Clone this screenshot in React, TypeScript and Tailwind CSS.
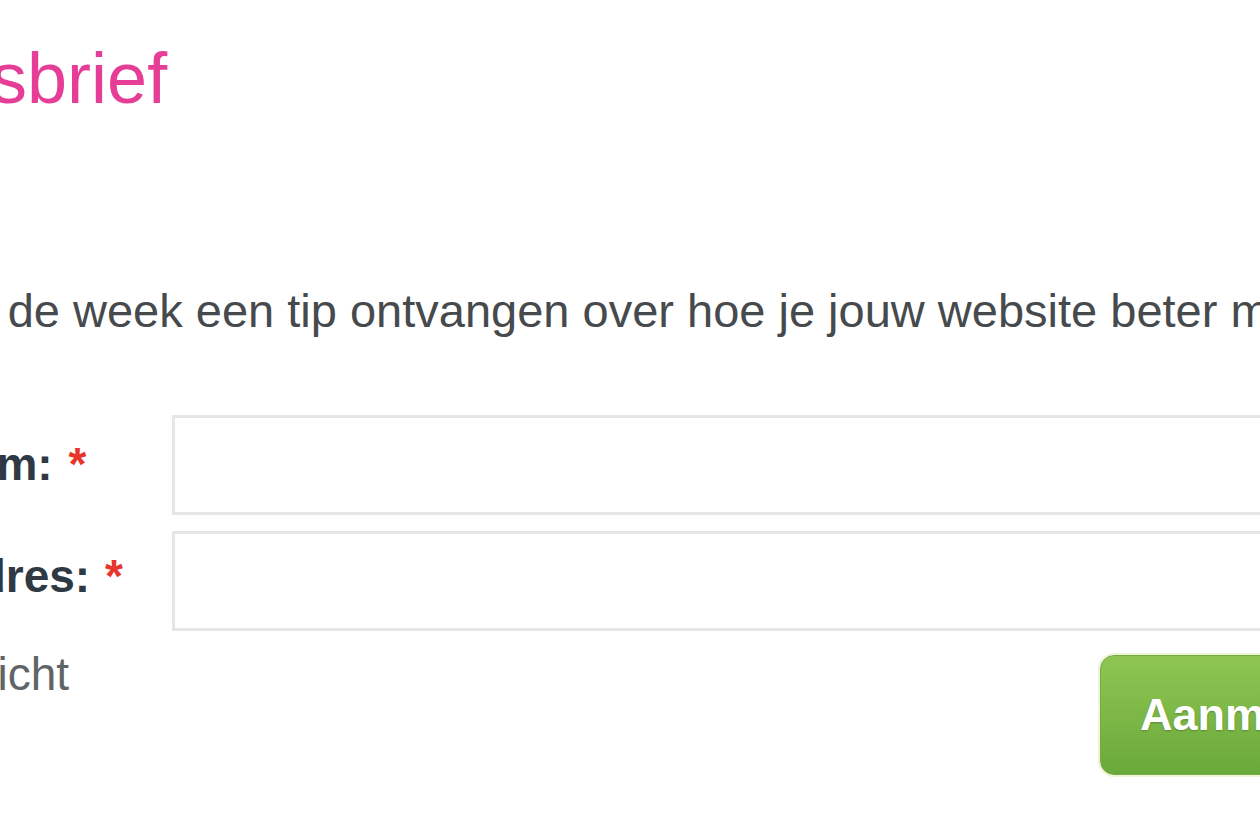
import React from "react";

export default function App() {
  return (
    <div className="w-[1260px] h-[840px] overflow-hidden bg-white font-['Liberation_Sans',Arial,sans-serif]">
      <h2 className="mt-[42px] ml-[-209px] whitespace-nowrap text-[72px] leading-[72px] font-normal text-[#e63d96]">
        Nieuwsbrief
      </h2>

      <p className="mt-[173px] ml-[-42px] whitespace-nowrap text-[47px] leading-[47px] text-[#474a4d]">
        in de week een tip ontvangen over hoe je jouw website beter maakt.
      </p>

      <form className="mt-[81px] flex flex-col">
        <div className="flex items-start">
          <label className="w-[172px] shrink-0 pt-[24px] whitespace-nowrap text-[46px] leading-[51px] font-bold text-[#2f3944]">
            <span className="ml-[-88px]">Naam:</span>
            <span className="ml-[3px] text-[#e8352c]"> *</span>
          </label>
          <input
            type="text"
            className="w-[1200px] shrink-0 h-[100px] border-[3px] border-[#e6e6e6] bg-white outline-none"
          />
        </div>

        <div className="mt-[16px] flex items-start">
          <label className="w-[172px] shrink-0 pt-[20px] whitespace-nowrap text-[46px] leading-[51px] font-bold text-[#2f3944]">
            <span className="ml-[-186px]">E-mailadres:</span>
            <span className="ml-[2px] text-[#e8352c]"> *</span>
          </label>
          <input
            type="email"
            className="w-[1200px] shrink-0 h-[100px] border-[3px] border-[#e6e6e6] bg-white outline-none"
          />
        </div>

        <div className="mt-[20px] flex items-start">
          <div className="w-[172px] shrink-0 whitespace-nowrap text-[46px] leading-[46px] text-[#5f6466]">
            <span className="ml-[-138px]">* Verplicht</span>
          </div>
          <button
            type="button"
            className="ml-[928px] mt-[4px] shrink-0 w-[360px] h-[120px] rounded-[14px] border border-[#78a945] bg-gradient-to-b from-[#8fc653] to-[#6aa93b] shadow-[0_0_0_2px_#eef4d6] pl-[39px] text-left text-[45px] font-bold text-white [text-shadow:0_1px_2px_rgba(0,0,0,0.25)]"
          >
            Aanmelden
          </button>
        </div>
      </form>
    </div>
  );
}
